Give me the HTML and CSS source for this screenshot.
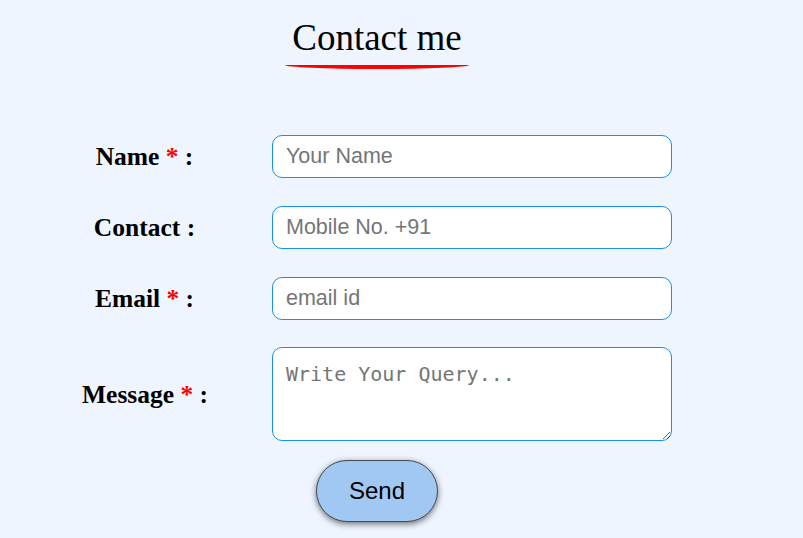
FILE: index.html
```html
<!DOCTYPE html>
<html>
<head>
<meta charset="utf-8">
<link rel="stylesheet" href="styles.css">
</head>
<body>
<div class="wrap">
  <div class="head"><h1 class="title">Contact me</h1></div>
  <form class="form">
    <label class="lbl">Name <span class="req">*</span> :</label>
    <input class="field" type="text" placeholder="Your Name">
    <label class="lbl">Contact :</label>
    <input class="field" type="text" placeholder="Mobile No. +91">
    <label class="lbl">Email <span class="req">*</span> :</label>
    <input class="field" type="text" placeholder="email id">
    <label class="lbl">Message <span class="req">*</span> :</label>
    <textarea class="area" placeholder="Write Your Query..."></textarea>
    <div class="actions"><button type="button" class="send">Send</button></div>
  </form>
</div>
</body>
</html>
```
FILE: styles.css
```css
html, body { margin: 0; padding: 0; }
body {
  background: #eef5ff;
  font-family: "Liberation Serif", "Times New Roman", serif;
  width: 803px;
  height: 538px;
  overflow: hidden;
}
.wrap {
  width: 590px;
  margin-left: 82px;
  padding-top: 17px;
}
.head {
  display: flex;
  flex-direction: column;
  align-items: center;
}
.title {
  margin: 0;
  font-weight: normal;
  font-size: 37px;
  line-height: 42px;
  position: relative;
}
.title::after {
  content: "";
  position: absolute;
  left: -7px;
  right: -7px;
  top: 44px;
  height: 4px;
  border-bottom: 4px solid #ff0000;
  border-radius: 50%;
}
.form {
  display: grid;
  grid-template-columns: 125px 400px;
  column-gap: 65px;
  row-gap: 28px;
  align-items: center;
  margin-top: 76px;
}
.lbl {
  text-align: center;
  font-weight: bold;
  font-size: 25.5px;
  color: #000;
  white-space: nowrap;
}
.req { color: #ff0000; }
.field, .area {
  box-sizing: border-box;
  width: 400px;
  border: 1px solid #1a8fe8;
  border-radius: 10px;
  background: #fff;
  outline: none;
  margin: 0;
}
.field {
  height: 43px;
  padding: 0 13px;
  font-family: "Liberation Sans", Arial, sans-serif;
  font-size: 21.5px;
}
.area {
  height: 94px;
  padding: 14px 13px;
  font-family: "DejaVu Sans Mono", monospace;
  font-size: 20px;
  resize: both;
  display: block;
  margin-top: -1px;
}
.field::placeholder, .area::placeholder { color: #757575; }
.actions {
  grid-column: 1 / -1;
  display: flex;
  justify-content: center;
  margin-top: -9px;
}
.send {
  width: 122px;
  height: 62px;
  border-radius: 31px;
  background: #a0c8f2;
  border: 1px solid #4a4a4a;
  box-shadow: 0 2px 6px rgba(0,0,0,0.55);
  font-family: "Liberation Sans", Arial, sans-serif;
  font-size: 24px;
  color: #000;
  cursor: pointer;
}
```
